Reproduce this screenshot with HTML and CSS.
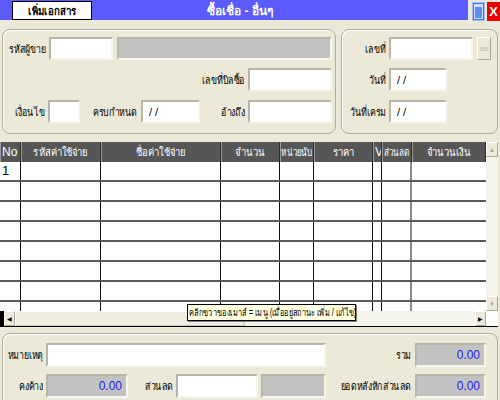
FILE: index.html
```html
<!DOCTYPE html>
<html>
<head>
<meta charset="utf-8">
<link rel="stylesheet" href="styles.css">
</head>
<body>
<div class="win">
  <div class="titlebar">
    <div class="bar">
      <div class="tag"><span class="t">เพิ่มเอกสาร</span></div>
      <div class="title">ซื้อเชื่อ - อื่นๆ</div>
      <div></div>
    </div>
    <div class="ico ico-min"><span class="winbox"></span></div>
    <div class="ico ico-close">X</div>
  </div>

  <div class="top">
    <div class="panel panel-left">
      <div class="frow">
        <span class="lbl w43"><span class="t">รหัสผู้ขาย</span></span>
        <span class="fld white w64"></span>
        <span class="fld gray w215 ml4"></span>
      </div>
      <div class="frow mt8">
        <span class="lbl w242"><span class="t">เลขที่บิลซื้อ</span></span>
        <span class="fld white w84"></span>
      </div>
      <div class="frow mt9">
        <span class="lbl w42"><span class="t">เงื่อนไข</span></span>
        <span class="fld white w32"></span>
        <span class="lbl w57 gap4"><span class="t">ครบกำหนด</span></span>
        <span class="fld white w59">/ /</span>
        <span class="lbl w45"><span class="t">อ้างถึง</span></span>
        <span class="fld white w84"></span>
      </div>
    </div>
    <div class="panel panel-right">
      <div class="frow">
        <span class="lbl w44"><span class="t">เลขที่</span></span>
        <span class="fld white w84"></span>
        <span class="selbtn">sel</span>
      </div>
      <div class="frow mt8">
        <span class="lbl w44"><span class="t">วันที่</span></span>
        <span class="fld white w58">/ /</span>
      </div>
      <div class="frow mt9">
        <span class="lbl w44"><span class="t">วันที่เครม</span></span>
        <span class="fld white w58">/ /</span>
      </div>
    </div>
  </div>

  <div class="grid">
    <div class="data">
      <div class="row head">
        <div class="c left">No</div>
        <div class="c"><span class="t">รหัสค่าใช้จ่าย</span></div>
        <div class="c"><span class="t">ชื่อค่าใช้จ่าย</span></div>
        <div class="c"><span class="t">จำนวน</span></div>
        <div class="c"><span class="t narrow">หน่วยนับ</span></div>
        <div class="c"><span class="t">ราคา</span></div>
        <div class="c left">V</div>
        <div class="c"><span class="t narrow">ส่วนลด</span></div>
        <div class="c"><span class="t">จำนวนเงิน</span></div>
      </div>
      <div class="row"><div class="c left">1</div><div class="c"></div><div class="c"></div><div class="c"></div><div class="c"></div><div class="c"></div><div class="c"></div><div class="c"></div><div class="c"></div></div>
      <div class="row"><div class="c"></div><div class="c"></div><div class="c"></div><div class="c"></div><div class="c"></div><div class="c"></div><div class="c"></div><div class="c"></div><div class="c"></div></div>
      <div class="row"><div class="c"></div><div class="c"></div><div class="c"></div><div class="c"></div><div class="c"></div><div class="c"></div><div class="c"></div><div class="c"></div><div class="c"></div></div>
      <div class="row"><div class="c"></div><div class="c"></div><div class="c"></div><div class="c"></div><div class="c"></div><div class="c"></div><div class="c"></div><div class="c"></div><div class="c"></div></div>
      <div class="row"><div class="c"></div><div class="c"></div><div class="c"></div><div class="c"></div><div class="c"></div><div class="c"></div><div class="c"></div><div class="c"></div><div class="c"></div></div>
      <div class="row"><div class="c"></div><div class="c"></div><div class="c"></div><div class="c"></div><div class="c"></div><div class="c"></div><div class="c"></div><div class="c"></div><div class="c"></div></div>
      <div class="row"><div class="c"></div><div class="c"></div><div class="c"></div><div class="c"></div><div class="c"></div><div class="c"></div><div class="c"></div><div class="c"></div><div class="c"></div></div>
      <div class="row"><div class="c"></div><div class="c"></div><div class="c"></div><div class="c"></div><div class="c"></div><div class="c"></div><div class="c"></div><div class="c"></div><div class="c"></div></div>
    </div>
    <div class="vscroll">
      <div class="sbtn gray-arrow">▲</div>
      <div class="vtrack"></div>
      <div class="sbtn gray-arrow">▼</div>
    </div>
    <div class="hscroll">
      <div class="hblack"></div>
      <div class="sbtn hbtn">◀</div>
      <div class="hthumb"></div>
      <div class="htrack"></div>
      <div class="sbtn hbtn">▶</div>
    </div>
    <div class="corner"></div>
    <div class="tooltip"><span class="t">คลิกขวาของเมาส์ = เมนู  (เมื่ออยู่สถานะ เพิ่ม / แก้ไข)</span></div>
  </div>

  <div class="panel panel-bottom">
    <div class="frow h24">
      <span class="lbl w40"><span class="t">หมายเหตุ</span></span>
      <span class="fld white w280"></span>
      <span class="lbl w85 gap4"><span class="t">รวม</span></span>
      <span class="fld gray w71 num">0.00</span>
    </div>
    <div class="frow h24 mt7">
      <span class="lbl w40"><span class="t">คงค้าง</span></span>
      <span class="fld gray w82 num">0.00</span>
      <span class="lbl w45"><span class="t">ส่วนลด</span></span>
      <span class="fld white w82"></span>
      <span class="fld gray w65 ml3"></span>
      <span class="lbl w85 gap4"><span class="t">ยอดหลังหักส่วนลด</span></span>
      <span class="fld gray w71 num">0.00</span>
    </div>
  </div>
</div>
</body>
</html>
```

FILE: styles.css
```css
html, body {
  margin: 0;
  padding: 0;
}
body {
  width: 500px;
  height: 400px;
  overflow: hidden;
  background: #ECE9D8;
  font-family: "Liberation Sans", "Noto Sans", sans-serif;
  font-size: 11px;
  color: #000;
}
.win {
  width: 500px;
  height: 400px;
  position: relative;
  overflow: hidden;
}
.t {
  display: inline-block;
  white-space: nowrap;
  flex-shrink: 0;
}

/* title bar */
.titlebar {
  display: flex;
  height: 21px;
}
.bar {
  width: 468px;
  height: 20px;
  background: #5B5BFB;
  display: grid;
  grid-template-columns: 1fr auto 1fr;
  align-items: center;
  padding-left: 12px;
  box-sizing: border-box;
}
.tag {
  width: 80px;
  height: 19px;
  box-sizing: border-box;
  background: #fff;
  border: 1px solid #000;
  font-weight: bold;
  font-size: 11px;
  display: flex;
  align-items: center;
  justify-content: center;
  align-self: start;
  margin-top: 1px;
}
.tag .t { transform: scaleX(0.88); }
.title {
  color: #fff;
  font-weight: bold;
  font-size: 12px;
}
.ico {
  width: 13px;
  height: 19px;
  margin-top: 2px;
  box-sizing: border-box;
}
.ico-min {
  margin-left: 4px;
  background: #3C78E6;
  border: 1px solid #9EC0F8;
  display: flex;
  align-items: center;
  justify-content: center;
}
.winbox {
  width: 7px;
  height: 11px;
  border: 1px solid #cfe0ff;
  border-top-width: 3px;
  background: #5d90ee;
}
.ico-close {
  margin-left: 2px;
  background: #EE0000;
  color: #fff;
  font-size: 13px;
  font-weight: bold;
  text-align: center;
  line-height: 19px;
}

/* panels */
.top {
  display: flex;
  margin-top: 8px;
  padding-left: 2px;
  gap: 5px;
}
.panel {
  border: 1px solid #B0AE9E;
  border-radius: 8px;
  box-sizing: border-box;
  box-shadow: inset 1px 1px 0 #fff;
}
.panel-left {
  width: 334px;
  height: 105px;
  padding-top: 7px;
}
.panel-right {
  width: 157px;
  height: 105px;
  padding-top: 7px;
}
.frow {
  display: flex;
  align-items: center;
  height: 23px;
}
.h24 { height: 24px; }
.mt7 { margin-top: 7px; }
.mt8 { margin-top: 8px; }
.mt9 { margin-top: 9px; }
.ml3 { margin-left: 3px; }
.ml4 { margin-left: 4px; }
.lbl {
  display: flex;
  justify-content: flex-end;
  flex-shrink: 0;
  padding-right: 3px;
  white-space: nowrap;
  box-sizing: content-box;
  font-size: 11px;
}
.lbl .t {
  transform: scaleX(0.8);
  transform-origin: right center;
}
.lbl.gap4 { padding-right: 4px; }
.fld {
  height: 100%;
  flex-shrink: 0;
  box-sizing: border-box;
  border: 2px solid;
  border-color: #B8B6A8 #F6F5EE #F6F5EE #B8B6A8;
  display: flex;
  align-items: center;
  padding-left: 6px;
  white-space: nowrap;
}
.white { background: #fff; }
.gray { background: #C2C2C2; }
.num {
  justify-content: flex-end;
  padding-right: 4px;
  color: #1E1EE6;
  font-size: 12px;
}
.selbtn {
  width: 14px;
  height: 23px;
  margin-left: 4px;
  box-sizing: border-box;
  border: 1px solid;
  border-color: #fff #A8A698 #A8A698 #fff;
  background: #ECE9D8;
  color: #B8B6AA;
  font-size: 7px;
  display: flex;
  align-items: center;
  justify-content: center;
}
.w32 { width: 32px; }
.w40 { width: 40px; }
.w42 { width: 42px; }
.w43 { width: 43px; }
.w44 { width: 44px; }
.w45 { width: 45px; }
.w57 { width: 57px; }
.w58 { width: 58px; }
.w59 { width: 59px; }
.w64 { width: 64px; }
.w65 { width: 65px; }
.w71 { width: 71px; }
.w82 { width: 82px; }
.w84 { width: 84px; }
.w85 { width: 85px; }
.w215 { width: 215px; }
.w242 { width: 242px; }
.w280 { width: 280px; }

/* grid */
.grid {
  position: relative;
  margin-top: 8px;
  width: 498px;
  display: grid;
  grid-template-columns: 486px 12px;
  grid-template-rows: 169px 15px;
  border-bottom: 1px solid #000;
}
.data {
  overflow: hidden;
  background: #fff;
}
.row {
  display: grid;
  grid-template-columns: 21px 80px 120px 59px 34px 59px 9px 30px 74px;
  height: 20px;
  box-sizing: border-box;
  border-bottom: 2px solid #5A5A5A;
}
.row .c {
  border-right: 1px solid #111;
  box-sizing: border-box;
  padding-left: 2px;
  font-size: 13px;
  line-height: 18px;
}
.row .c:nth-child(8) { border-right: 2px solid #8A8A8A; }
.row .c:last-child { border-right: none; }
.row.head {
  background: #565656;
  border-bottom: none;
}
.row.head .c {
  color: #fff;
  font-size: 11px;
  display: flex;
  justify-content: center;
  align-items: center;
  padding-left: 0;
  border-right: 1px solid #2a2a2a;
  box-shadow: inset 1px 0 0 #9a9a9a;
  white-space: nowrap;
  overflow: hidden;
}
.row.head .c .t { transform: scaleX(0.86); }
.row.head .c .t.narrow { transform: scaleX(0.74); }
.row.head .c.left { justify-content: flex-start; padding-left: 2px; font-size: 12px; }
.row.head .c:last-child { border-right: 1px solid #2a2a2a; }

.vscroll {
  display: flex;
  flex-direction: column;
  background: #F4F3EC;
}
.sbtn {
  height: 15px;
  background: #ECE9D8;
  border: 1px solid;
  border-color: #fff #ACA899 #ACA899 #fff;
  box-sizing: border-box;
  font-size: 6px;
  display: flex;
  align-items: center;
  justify-content: center;
}
.gray-arrow { color: #A8A698; }
.vtrack {
  flex: 1;
  background: #F4F3EC;
}
.hscroll {
  display: flex;
  background: #F4F3EC;
}
.hblack {
  width: 4px;
  background: #000;
}
.hbtn {
  width: 11px;
  height: 15px;
  color: #000;
}
.hthumb {
  width: 230px;
  background: #EFEDE1;
  border: 1px solid;
  border-color: #fff #C9C6B6 #C9C6B6 #fff;
  box-sizing: border-box;
}
.htrack {
  flex: 1;
  background: #F4F3EC;
}
.corner { background: #fff; }
.tooltip {
  position: absolute;
  left: 187px;
  top: 162px;
  width: 169px;
  height: 17px;
  box-sizing: border-box;
  background: #FFFFE1;
  border: 1px solid #000;
  box-shadow: 1px 1px 0 #808080;
  font-size: 10px;
  line-height: 15px;
  padding-left: 1px;
  white-space: nowrap;
  overflow: hidden;
}
.tooltip .t {
  transform: scaleX(0.74);
  transform-origin: left center;
}

.panel-bottom {
  margin-top: 6px;
  margin-left: 2px;
  width: 496px;
  height: 80px;
  padding-top: 9px;
}
```
